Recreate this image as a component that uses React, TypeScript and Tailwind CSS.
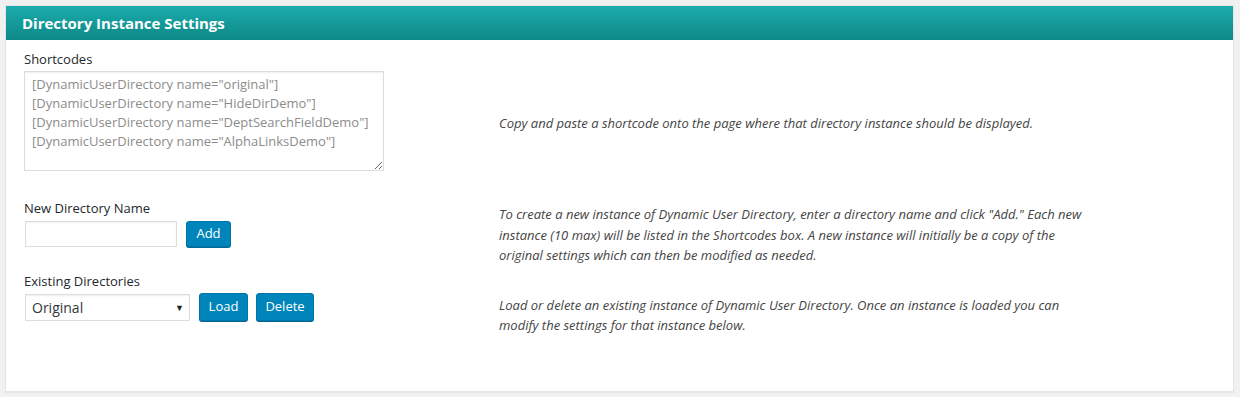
import React from "react";

const font = { fontFamily: '"Open Sans", "Noto Sans", sans-serif' };

export default function App() {
  return (
    <div className="h-[397px] bg-[#f1f1f1] p-[5px] pr-[6px]" style={font}>
      <div className="h-full border border-[#e5e5e5] bg-white shadow-[0_1px_1px_rgba(0,0,0,0.04)]">
        <div className="flex h-[34px] items-center bg-gradient-to-b from-[#1bacac] to-[#0d8887] pl-[16px]">
          <h2 className="text-[15px] font-bold text-white">Directory Instance Settings</h2>
        </div>

        <div className="pl-[18px] pt-[9px] text-[13px] text-[#23282d]">
          {/* shortcodes */}
          <div className="grid grid-cols-[475px_1fr]">
            <div>
              <label className="block leading-[20px]">Shortcodes</label>
              <textarea
                readOnly
                wrap="off"
                className="mt-[2px] block h-[100px] w-[360px] resize-y overflow-hidden whitespace-pre border border-[#dddddd] px-[7px] py-[3px] text-[13px] leading-[19px] text-[#8c8c8c] shadow-[inset_0_1px_2px_rgba(0,0,0,0.07)] outline-none"
                value={
                  '[DynamicUserDirectory name="original"]\n[DynamicUserDirectory name="HideDirDemo"]\n[DynamicUserDirectory name="DeptSearchFieldDemo"]\n[DynamicUserDirectory name="AlphaLinksDemo"]'
                }
              />
            </div>
            <p className="mt-[64px] italic leading-[20px] text-[#444]">
              Copy and paste a shortcode onto the page where that directory instance should be displayed.
            </p>
          </div>

          {/* new directory */}
          <div className="mt-[27px] grid grid-cols-[475px_1fr]">
            <div>
              <label className="block leading-[20px]">New Directory Name</label>
              <div className="mt-[3px] flex items-center gap-[9px] pl-px">
                <input
                  type="text"
                  className="h-[26px] w-[152px] border border-[#dddddd] shadow-[inset_0_1px_2px_rgba(0,0,0,0.07)] outline-none"
                />
                <button className="h-[26px] w-[45px] rounded-[3px] border border-[#0073aa] bg-[#0085ba] text-[13px] text-white shadow-[0_1px_0_#006799]">
                  Add
                </button>
              </div>
            </div>
            <p className="mt-[6px] italic leading-[20.5px] text-[#444]">
              To create a new instance of Dynamic User Directory, enter a directory name and click "Add." Each new
              <br />
              instance (10 max) will be listed in the Shortcodes box. A new instance will initially be a copy of the
              <br />
              original settings which can then be modified as needed.
            </p>
          </div>

          {/* existing */}
          <div className="mt-[5px] grid grid-cols-[475px_1fr]">
            <div>
              <label className="block leading-[20px]">Existing Directories</label>
              <div className="mt-[2px] flex items-center pl-px">
                <div className="relative mt-px h-[27px] w-[165px] border border-[#dddddd] shadow-[inset_0_1px_2px_rgba(0,0,0,0.07)]">
                  <select className="h-full w-full appearance-none bg-transparent pl-[6px] text-[14px] text-[#32373c] outline-none">
                    <option>Original</option>
                  </select>
                  <span className="pointer-events-none absolute right-[5px] top-[6px] text-[9px] text-[#222]">▼</span>
                </div>
                <button className="ml-[9px] h-[28px] w-[49px] rounded-[3px] border border-[#0073aa] bg-[#0085ba] text-[13px] text-white shadow-[0_1px_0_#006799]">
                  Load
                </button>
                <button className="ml-[8px] h-[28px] w-[58px] rounded-[3px] border border-[#0073aa] bg-[#0085ba] text-[13px] text-white shadow-[0_1px_0_#006799]">
                  Delete
                </button>
              </div>
            </div>
            <p className="mt-[24px] italic leading-[20.5px] text-[#444]">
              Load or delete an existing instance of Dynamic User Directory. Once an instance is loaded you can
              <br />
              modify the settings for that instance below.
            </p>
          </div>
        </div>
      </div>
    </div>
  );
}
